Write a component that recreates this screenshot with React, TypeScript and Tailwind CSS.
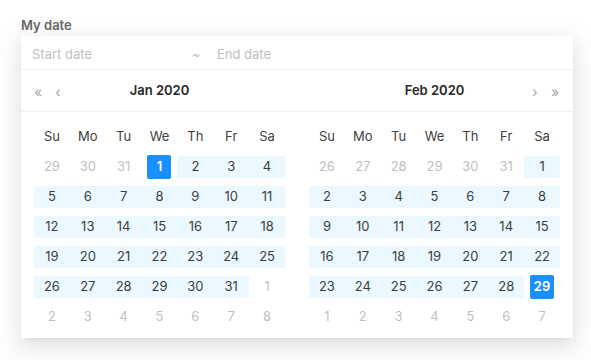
type Day = { n: number; muted: boolean; range: boolean; selected: boolean };

const weekdays = ['Su', 'Mo', 'Tu', 'We', 'Th', 'Fr', 'Sa'];

function buildMonth(prevFrom: number, prevTo: number, days: number, start: 'first' | 'last'): Day[] {
  const cells: Day[] = [];
  for (let d = prevFrom; d <= prevTo; d++) cells.push({ n: d, muted: true, range: false, selected: false });
  for (let d = 1; d <= days; d++) {
    const selected = start === 'first' ? d === 1 : d === days;
    cells.push({ n: d, muted: false, range: !selected, selected });
  }
  let next = 1;
  while (cells.length < 42) cells.push({ n: next++, muted: true, range: false, selected: false });
  return cells;
}

const jan = buildMonth(29, 31, 31, 'first');
const feb = buildMonth(26, 31, 29, 'last');

function Calendar({ title, days, side }: { title: string; days: Day[]; side: 'left' | 'right' }) {
  return (
    <div className="w-[251px]">
      <div className="grid grid-cols-[60px_1fr_60px] items-center h-[41px] pt-[1px]">
        <div className="flex items-center gap-[10px] -ml-[1px] text-[14px] text-[#a6a6a6]">
          {side === 'left' && (
            <>
              <span className="w-[10px] text-center">«</span>
              <span className="w-[10px] text-center">‹</span>
            </>
          )}
        </div>
        <div className="text-center text-[13px] font-semibold text-[#262626]">{title}</div>
        <div className="flex items-center justify-end gap-[10px] text-[14px] text-[#a6a6a6]">
          {side === 'right' && (
            <>
              <span className="w-[10px] text-center">›</span>
              <span className="w-[10px] text-center">»</span>
            </>
          )}
        </div>
      </div>
      <div className="border-t border-[#f0f0f0] -mx-[13px]" />
      <div className="pt-[10px] pb-[6px]">
        <div className="grid grid-cols-7">
          {weekdays.map((w) => (
            <div key={w} className="h-[30px] flex items-center justify-center text-[13px] text-[#404040]">
              {w}
            </div>
          ))}
          {days.map((d, i) => (
            <div key={i} className="h-[30px] flex items-center justify-center">
              <div
                className={`w-full h-[22px] flex items-center justify-center ${d.range ? 'bg-[#ecf8ff]' : ''}`}
              >
                {d.selected ? (
                  <span className="w-6 h-6 rounded-[2px] bg-[#1890ff] text-white font-semibold text-[13px] flex items-center justify-center">
                    {d.n}
                  </span>
                ) : (
                  <span className={`text-[13px] ${d.muted ? 'text-[#bfbfbf]' : 'text-[#3d3d3d]'}`}>{d.n}</span>
                )}
              </div>
            </div>
          ))}
        </div>
      </div>
    </div>
  );
}

export default function App() {
  return (
    <div className="w-[591px] h-[360px] bg-white pt-[16px] pl-[21px]" style={{ fontFamily: 'Inter, "Noto Sans", sans-serif' }}>
      <div className="text-[13px] font-semibold text-[#666666] leading-[18px]">My date</div>
      <div className="mt-[2px] w-[552px] bg-white shadow-[0_3px_6px_-4px_rgba(0,0,0,0.12),0_6px_16px_0_rgba(0,0,0,0.08),0_9px_28px_8px_rgba(0,0,0,0.05)]">
        <div className="flex items-center h-[34px] pt-[5px] px-[11px] border-b border-[#f0f0f0] text-[13px] text-[#bfbfbf]">
          <span className="w-[156px]">Start date</span>
          <span className="w-4 text-center">~</span>
          <span className="ml-[13px]">End date</span>
        </div>
        <div className="flex px-[13px] gap-[24px] overflow-hidden">
          <Calendar title="Jan 2020" days={jan} side="left" />
          <Calendar title="Feb 2020" days={feb} side="right" />
        </div>
      </div>
    </div>
  );
}
